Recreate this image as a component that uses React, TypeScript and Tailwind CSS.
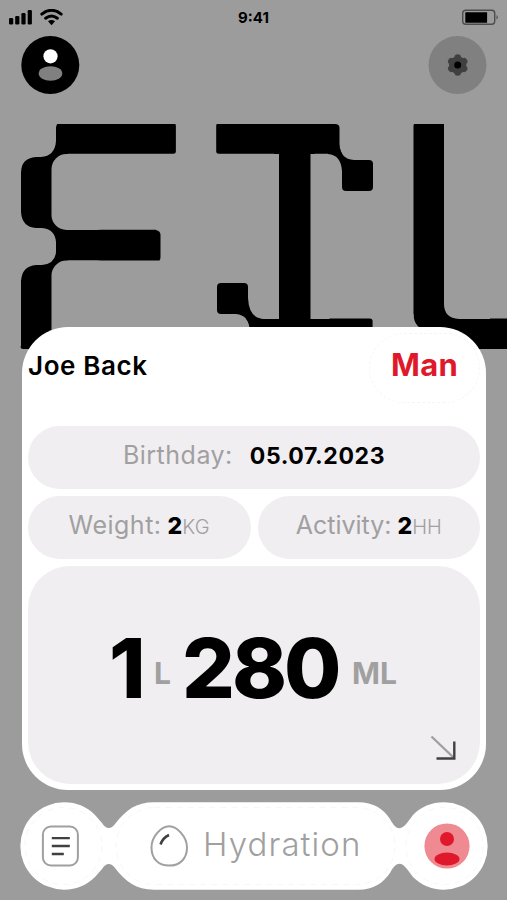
import type { ReactNode } from "react";

function StatusBar() {
  return (
    <div className="flex h-9 items-start justify-between pt-[9px] pr-[9px] pl-[9px]">
      <svg className="h-[17px] w-[56px]" viewBox="0 0 56 17">
        <rect x="0" y="9" width="4.2" height="6.5" rx="1.3" />
        <rect x="6.2" y="7" width="4.2" height="8.5" rx="1.3" />
        <rect x="12.4" y="4" width="4.2" height="11.5" rx="1.3" />
        <rect x="18.7" y="1" width="4.2" height="14.5" rx="1.3" />
        <g fill="none" stroke="black" strokeWidth="3" strokeLinecap="round">
          <path d="M32.8 5.1 Q42.5 -2.5 52.2 5.1" />
          <path d="M36.6 9.2 Q42.5 4.7 48.4 9.2" />
        </g>
        <path d="M39 12.2 Q42.5 9.8 46 12.2 L42.5 16.2Z" />
      </svg>
      <span className="w-[60px] pt-px text-center text-[15px] leading-4 font-bold">9:41</span>
      <svg className="h-[17px] w-[56px]" viewBox="0 0 56 17">
        <rect x="20.7" y="1.2" width="32" height="14" rx="3" fill="none" stroke="#4c4c4c" strokeWidth="1.4" />
        <rect x="23.3" y="3.2" width="21.8" height="10.5" rx="0.5" />
        <path d="M54.5 6 Q57 8.2 54.5 10.8Z" fill="#4c4c4c" />
      </svg>
    </div>
  );
}

function Header() {
  return (
    <div className="flex justify-between pr-[20px] pl-[21px]">
      <button className="h-[59px] w-[59px]" aria-label="Profile">
        <svg viewBox="0 0 59 59">
          <circle cx="29.3" cy="29" r="29" />
          <circle cx="29.5" cy="20.3" r="7.1" fill="white" />
          <ellipse cx="29.5" cy="37.5" rx="11.8" ry="7.3" fill="#808080" />
        </svg>
      </button>
      <button className="h-[59px] w-[59px]" aria-label="Settings">
        <svg viewBox="0 0 59 59">
          <circle cx="29.5" cy="29" r="29" fill="#808080" />
          <g fill="#404040">
            <circle cx="29.7" cy="29" r="8.7" />
            {[0, 60, 120, 180, 240, 300].map((angle) => (
              <circle key={angle} cx="29.7" cy="21.6" r="3.3" transform={`rotate(${angle} 29.7 29)`} />
            ))}
          </g>
          <circle cx="29.7" cy="29" r="3.5" />
        </svg>
      </button>
    </div>
  );
}

// Oversized title, cut off by the right edge of the screen
function Title() {
  return (
    <svg className="mt-[29px] h-[226px] w-full shrink-0 font-['Liberation_Mono',monospace] text-[335px]" viewBox="0 0 507 226">
      <g stroke="black" strokeWidth="5" strokeLinejoin="round">
        <text transform="translate(-9.5 222.5) scale(1.03 1)">F</text>
        <text transform="translate(182 222.5) scale(1.12 1)">I</text>
        <text transform="translate(376.5 222.5) scale(1.02 1)">L</text>
      </g>
      {/* joints under the rounded counters */}
      <rect x="50" y="28" width="18" height="18" />
      <rect x="50" y="90" width="18" height="18" />
      <rect x="50" y="135" width="18" height="18" />
      <rect x="443" y="180" width="18" height="18" />
      {/* counters and notches */}
      <g fill="#9c9c9c">
        <rect x="51.5" y="30" width="60" height="76" rx="15" />
        <rect x="51.5" y="136.5" width="60" height="110" rx="15" />
        <path d="M185 103 V141 H156 Q160.500 137 160.500 133 V111 Q160.500 107 156 106 V103Z" />
        <rect x="260" y="30" width="19" height="165" />
        <rect x="310.5" y="30" width="19" height="165" />
        <path d="M444 -3 H490 V195 H459 Q444 194 444 180Z" />
        <path d="M10 -3 H60 Q56 0 56 4 V17 Q55 32 41 33 H36 Q21 34 21 49 H10Z" />
        <path d="M10 88 H21 Q22 103 36 104 H42 Q55 105 56 118 V128 Q55 140 42 141 H36 Q22 142 21 157 H10Z" />
        <rect x="10" y="48" width="11" height="41" />
        <rect x="10" y="156" width="11" height="66" />
        <path d="M335 -3 H385 V36 H354 Q340 35 339.5 20 V4 Q339.5 0 335 0Z" />
        <path d="M205 190 H236 Q249 191 250 207 V230 H205Z" />
        <path d="M405 190 H413.5 Q414 205 428 206 H434 Q447 207 448 220 V230 H405Z" />
      </g>
      {/* square terminals */}
      <rect x="342" y="36" width="31" height="31" rx="4" />
      <rect x="217" y="159" width="31" height="31" rx="4" />
      <path d="M328 29 H339.5 V20 Q340 35 354 36 V47 H342 Q341 31 328 30Z" />
      <path d="M247 174 H248 Q249 194 263 195 V206 H250 Q249 191 236 190Z" />
    </svg>
  );
}

function Pill({ label, children }: { label: ReactNode; children: ReactNode }) {
  return (
    <div className="flex h-[63px] flex-1 items-center justify-center rounded-full bg-[#f0eef1] pb-[3px] text-[23px]">
      {label}
      {children}
    </div>
  );
}

function ProfileCard() {
  return (
    <section className="relative -mt-[23px] ml-[22px] flex h-[463px] w-[464px] flex-col gap-[7px] rounded-[46px] bg-white p-[6px]">
      <div className="flex h-[86px] items-start justify-between">
        <h1 className="pt-[15px] text-[26px] leading-9 font-semibold tracking-[0.6px]">Joe Back</h1>
        <div className="flex h-[70px] w-[111px] items-center justify-center rounded-full border border-dashed border-[#f5f5f5] pb-[7px] text-[31px] leading-9 font-bold tracking-[0.3px] text-[#df182b]">
          Man
        </div>
      </div>

      <div className="flex">
        <Pill label={<span className="text-[25px] tracking-[0.5px] text-[#a0a0a0]">Birthday:</span>}>
          <span className="ml-[17px] font-bold tracking-[0.6px]">05.07.2023</span>
        </Pill>
      </div>

      <div className="flex gap-[7px]">
        <Pill label={<span className="text-[25px] tracking-[0.5px] text-[#a0a0a0]">Weight:</span>}>
          <span className="ml-[6px] font-extrabold">2</span>
          <span className="pt-px text-[20px] font-light tracking-[0.3px] text-[#a0a0a0]">KG</span>
        </Pill>
        <Pill label={<span className="text-[25px] text-[#a0a0a0]">Activity:</span>}>
          <span className="ml-[6px] font-extrabold">2</span>
          <span className="pt-px text-[20px] font-light text-[#a0a0a0]">HH</span>
        </Pill>
      </div>

      <div className="relative flex flex-1 items-start rounded-[42px] bg-[#f0eef1] pt-[60px] pl-[82px] leading-[84px]">
        <span className="-ml-px w-[45px] text-[83px] font-extrabold">1</span>
        <span className="w-[28px] pt-[5px] text-[30px] font-bold text-[#a0a0a0]">L</span>
        <span className="w-[170px] text-[83px] font-extrabold tracking-[-3px]">280</span>
        <span className="pt-[5px] text-[30px] font-bold text-[#a0a0a0]">ML</span>
        <svg className="absolute right-[23px] bottom-[23px] h-[26px] w-[27px]" viewBox="0 0 27 26" fill="none" strokeWidth="2.4">
          <path d="M1.5 1.5 L24 23" stroke="#a0a0a0" />
          <path d="M6.5 23.5 H24.3 V6.5" stroke="#404040" />
        </svg>
      </div>
    </section>
  );
}

function BottomNav() {
  return (
    <nav className="relative mt-3 ml-5 h-[88px] w-[468px]">
      <svg className="absolute inset-0" viewBox="0 0 468 88" fill="white">
        <path d="M44 0.3 C57 0.3 67 5 75 13 L82 21 C86 27.5 91 27.5 95 22 C106 8 116 0.3 134 0.3 H338 C354 0.3 363 7 370 17 C376 28.5 381 28.5 387 21 L393 13 C401 5 411 0.3 424 0.3 A43.7 43.7 0 0 1 424 87.7 C411 87.7 401 83 393 75 L387 67 C381 59.5 376 59.5 370 71 C363 81 354 87.7 338 87.7 H134 C116 87.7 106 80 95 66 C91 60.5 86 60.5 82 67 L75 75 C67 83 57 87.7 44 87.7 A43.7 43.7 0 0 1 44 0.3Z" />
        <g fill="none" stroke="#f7f7f7" strokeDasharray="6 5">
          <circle cx="43.5" cy="44" r="38.5" />
          <rect x="96" y="5.5" width="279" height="77" rx="38.5" />
          <circle cx="424.5" cy="44" r="38.5" />
        </g>
      </svg>
      <div className="relative flex h-full items-center">
        <button className="ml-[21px] h-[42px] w-[38px]" aria-label="Journal">
          <svg viewBox="0 0 38 42" fill="none">
            <rect x="1.9" y="1.5" width="35" height="39" rx="8" stroke="#a0a0a0" strokeWidth="2" />
            <path d="M10.8 13.2 H28.8 M10.8 21 H28.8 M10.8 29 H22.8" stroke="#404040" strokeWidth="2.3" />
          </svg>
        </button>
        <button className="ml-[71px] flex h-full items-center text-[#a0a0a0]">
          <svg className="h-[42px] w-[38px]" viewBox="0 0 38 42" fill="none">
            <path d="M19.2 1.3 C27 1.3 37 12 37 22.5 C37 33.5 30 40.6 19.2 40.6 C8 40.6 1.5 33.5 1.5 22.5 C1.5 12 11 1.3 19.2 1.3Z" stroke="#a0a0a0" strokeWidth="2" />
            <path d="M10.5 19.5 C12 15 14.5 12 19 10" stroke="#404040" strokeWidth="2.5" />
          </svg>
          <span className="ml-[15px] pb-[2px] text-[33px] font-light tracking-[1.1px]">Hydration</span>
        </button>
        <button className="absolute right-[18px] h-[46px] w-[46px]" aria-label="Account">
          <svg viewBox="0 0 46 46">
            <circle cx="23" cy="23" r="22.6" fill="#f08a92" />
            <circle cx="23" cy="16" r="7" fill="#df182b" />
            <ellipse cx="23" cy="36" rx="12.5" ry="6.5" fill="#df182b" />
          </svg>
        </button>
      </div>
    </nav>
  );
}

export default function App() {
  return (
    <main className="flex h-[900px] w-[507px] flex-col overflow-hidden bg-[#9c9c9c] font-['Inter','Liberation_Sans',sans-serif] text-black">
      <StatusBar />
      <Header />
      <Title />
      <ProfileCard />
      <BottomNav />
    </main>
  );
}
